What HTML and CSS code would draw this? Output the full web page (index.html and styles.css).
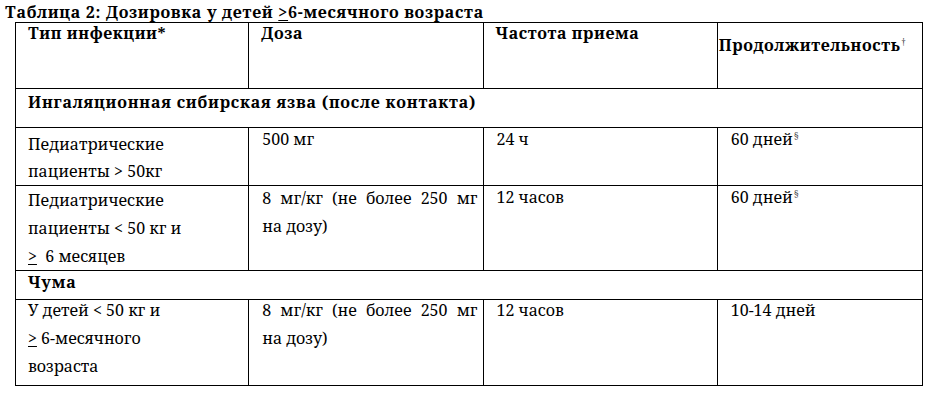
FILE: index.html
```html
<!DOCTYPE html>
<html lang="ru">
<head>
<meta charset="utf-8">
<title>Таблица 2</title>
<link rel="stylesheet" href="styles.css">
</head>
<body>
<div class="caption">Таблица 2: Дозировка у детей <u>&gt;</u>6-месячного возраста</div>
<table class="dose">
  <colgroup>
    <col class="c1"><col class="c2"><col class="c3"><col class="c4">
  </colgroup>
  <tr class="r-head">
    <th><div class="h h1">Тип инфекции*</div></th>
    <th><div class="h h1">Доза</div></th>
    <th><div class="h h1">Частота приема</div></th>
    <th><div class="h h4">Продолжительность<sup class="sm">†</sup></div></th>
  </tr>
  <tr class="r-sec1">
    <td colspan="4"><div class="sec sec1">Ингаляционная сибирская язва (после контакта)</div></td>
  </tr>
  <tr class="r-a">
    <td><div class="t ta1">Педиатрические<br>пациенты &gt; 50кг</div></td>
    <td><div class="t ta2">500 мг</div></td>
    <td><div class="t ta2">24 ч</div></td>
    <td><div class="t ta2">60 дней<sup class="sm">§</sup></div></td>
  </tr>
  <tr class="r-b">
    <td><div class="t tb1">Педиатрические<br>пациенты &lt; 50 кг и<br><u>&gt;</u>&nbsp; 6 месяцев</div></td>
    <td><div class="t tb2"><span class="just">8 мг/кг (не более 250 мг</span><br>на дозу)</div></td>
    <td><div class="t tb3">12 часов</div></td>
    <td><div class="t tb3">60 дней<sup class="sm">§</sup></div></td>
  </tr>
  <tr class="r-sec2">
    <td colspan="4"><div class="sec sec2">Чума</div></td>
  </tr>
  <tr class="r-c">
    <td><div class="t tc">У детей &lt; 50 кг и<br><u>&gt;</u> 6-месячного<br>возраста</div></td>
    <td><div class="t tc"><span class="just">8 мг/кг (не более 250 мг</span><br>на дозу)</div></td>
    <td><div class="t tc">12 часов</div></td>
    <td><div class="t tc">10-14 дней</div></td>
  </tr>
</table>
</body>
</html>
```

FILE: styles.css
```css
html, body {
  margin: 0;
  padding: 0;
  background: #ffffff;
}
body {
  width: 939px;
  height: 404px;
  overflow: hidden;
  font-family: "Noto Serif", "DejaVu Serif", serif;
  color: #000;
  font-size: 16px;
}
u {
  text-decoration-thickness: 1px;
  text-underline-offset: 2px;
}
.caption {
  font-family: "Noto Serif", "DejaVu Serif", serif;
  font-weight: bold;
  font-size: 16px;
  line-height: 20px;
  padding: 2px 0 0 5px;
  height: 20px;
  white-space: nowrap;
  letter-spacing: 0.7px;
}
.dose {
  margin-left: 15px;
  border-collapse: collapse;
  table-layout: fixed;
  width: 908px;
  font-family: "Noto Serif", "DejaVu Serif", serif;
  font-size: 16px;
}
.c1 { width: 233px; }
.c2 { width: 234px; }
.c3 { width: 234px; }
.c4 { width: 205px; }
.dose th, .dose td {
  border: 1px solid #000;
  padding: 0;
  vertical-align: top;
  text-align: left;
  font-weight: normal;
  font-family: "Noto Serif", "DejaVu Serif", serif;
  font-size: 16px;
  overflow: hidden;
}
.r-head { height: 66px; }
.r-sec1 { height: 39px; }
.r-a { height: 58px; }
.r-b { height: 85px; }
.r-sec2 { height: 29px; }
.r-c { height: 86px; }

.h {
  font-weight: bold;
  line-height: 18px;
  white-space: nowrap;
  letter-spacing: 0.6px;
}
.h1 { padding: 1px 0 0 12px; }
.h4 { padding: 13px 0 0 1px; }
.sm {
  font-size: 9px;
  font-weight: normal;
  vertical-align: 6px;
  line-height: 0;
  color: #444;
  padding-left: 1px;
  letter-spacing: 0;
}
.sec {
  font-weight: bold;
  line-height: 20px;
  padding-left: 12px;
  white-space: nowrap;
  letter-spacing: 0.8px;
}
.sec1 { padding-top: 3px; }
.sec2 { padding-top: 1px; }

.t {
  line-height: 28px;
  padding-left: 13px;
  white-space: nowrap;
}
.ta1 { margin-top: 3px; line-height: 27px; padding-left: 12px; }
.ta2 { margin-top: -3px; }
.tb1 { margin-top: 0; padding-left: 12px; }
.tb2 { margin-top: -2px; }
.tb3 { margin-top: -3px; }
.tc { margin-top: -4px; }
.r-c td:first-child .tc { padding-left: 12px; }
.just { word-spacing: 5px; }
```
